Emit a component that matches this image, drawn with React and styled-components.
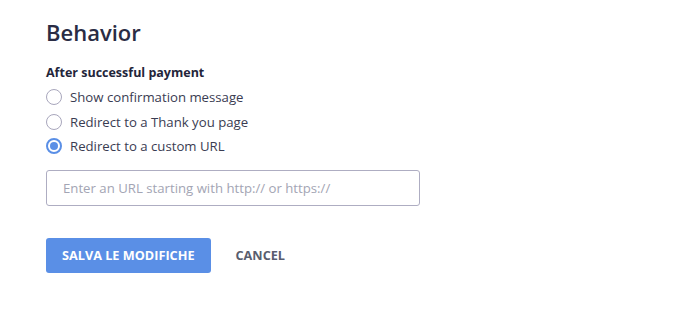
import React, { useState } from 'react'
import styled, { createGlobalStyle } from 'styled-components'

const Global = createGlobalStyle`
  body {
    margin: 0;
    background: #ffffff;
    font-family: "Open Sans", "Noto Sans", sans-serif;
    color: #2b2d42;
  }
`

const Page = styled.section`
  padding: 16px 46px;
`

const Title = styled.h1`
  margin: 0 0 16px;
  font-size: 22px;
  font-weight: 600;
  line-height: 32px;
  color: #2a2c44;
`

const Group = styled.fieldset`
  border: 0;
  margin: 0;
  padding: 0;
`

const Legend = styled.legend`
  padding: 0;
  margin-bottom: 3px;
  font-size: 12.5px;
  font-weight: 700;
  line-height: 18px;
  color: #23253a;
`

const Option = styled.label`
  display: flex;
  align-items: center;
  gap: 8px;
  height: 24.5px;
  font-size: 13.2px;
  color: #3a3c52;
  cursor: pointer;
`

const Dot = styled.span`
  box-sizing: border-box;
  width: 16px;
  height: 16px;
  border-radius: 50%;
  border: ${p => (p.$on ? '2px solid #5a8fe6' : '1px solid #a8a6bc')};
  display: flex;
  align-items: center;
  justify-content: center;
  &::after {
    content: '';
    display: ${p => (p.$on ? 'block' : 'none')};
    width: 8px;
    height: 8px;
    border-radius: 50%;
    background: #5a8fe6;
  }
`

const Hidden = styled.input`
  display: none;
`

const UrlInput = styled.input`
  box-sizing: border-box;
  display: block;
  width: 374px;
  height: 36px;
  margin-top: 11px;
  padding: 0 16px;
  border: 1px solid #aeadc2;
  border-radius: 3px;
  font-family: inherit;
  font-size: 13.2px;
  color: #2b2d42;
  outline: none;
  &::placeholder {
    color: #a3a5b4;
  }
`

const Actions = styled.div`
  display: flex;
  align-items: center;
  gap: 25px;
  margin-top: 32px;
`

const Button = styled.button`
  height: 35px;
  padding: 0 ${p => (p.$primary ? '16px' : '0')};
  border: 0;
  border-radius: 3px;
  background: ${p => (p.$primary ? '#5a8fe6' : 'transparent')};
  color: ${p => (p.$primary ? '#ffffff' : '#595d6e')};
  font-family: inherit;
  font-size: 12.7px;
  font-weight: 700;
  text-transform: uppercase;
  cursor: pointer;
`

const options = [
  'Show confirmation message',
  'Redirect to a Thank you page',
  'Redirect to a custom URL'
]

export default function App () {
  const [choice, setChoice] = useState(2)

  return (
    <Page>
      <Global />
      <Title>Behavior</Title>
      <Group>
        <Legend>After successful payment</Legend>
        {options.map((text, i) => (
          <Option key={text}>
            <Hidden type='radio' name='after' checked={choice === i} onChange={() => setChoice(i)} />
            <Dot $on={choice === i} />
            {text}
          </Option>
        ))}
      </Group>
      <UrlInput placeholder='Enter an URL starting with http:// or https://' />
      <Actions>
        <Button $primary>Salva le modifiche</Button>
        <Button>Cancel</Button>
      </Actions>
    </Page>
  )
}
